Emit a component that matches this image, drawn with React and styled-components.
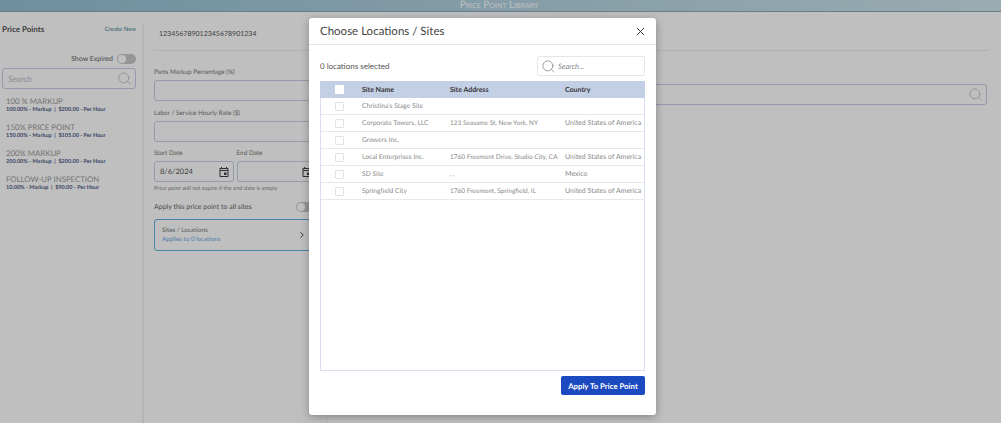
import React from "react";
import styled, { createGlobalStyle } from "styled-components";
import { Search, X, ChevronRight } from "lucide-react";
import { MdOutlineEvent } from "react-icons/md";

const GlobalStyle = createGlobalStyle`
  html, body { margin: 0; padding: 0; height: 100%; overflow: hidden; }
  #root { height: 100%; }
  body {
    font-family: "Lato", "Noto Sans", sans-serif;
    color: #444;
    background: #fff;
    text-rendering: geometricPrecision;
  }
  * { box-sizing: border-box; }
`;

const pricePoints = [
  { name: "100 % MARKUP", detail: "100.00% - Markup  |  $200.00 - Per Hour" },
  { name: "150% PRICE POINT", detail: "150.00% - Markup  |  $105.00 - Per Hour" },
  { name: "200% MARKUP", detail: "200.00% - Markup  |  $200.00 - Per Hour" },
  { name: "FOLLOW-UP INSPECTION", detail: "10.00% - Markup  |  $90.00 - Per Hour" },
];

const sites = [
  { name: "Christina's Stage Site", address: "", country: "" },
  { name: "Corporate Towers, LLC", address: "123 Seasame St, New York, NY", country: "United States of America" },
  { name: "Growers Inc.", address: "", country: "" },
  { name: "Local Enterprises Inc.", address: "1760 Freemont Drive, Studio City, CA", country: "United States of America" },
  { name: "SD Site", address: ", ,", country: "Mexico" },
  { name: "Springfield City", address: "1760 Freemont, Springfield, IL", country: "United States of America" },
];

const App = () => {
  return (
    <>
      <GlobalStyle />
      <Page>
        <TopBar>Price Point Library</TopBar>
        <Body>
          <Sidebar>
            <SideHead>
              <SideTitle>Price Points</SideTitle>
              <CreateLink>Create New</CreateLink>
            </SideHead>
            <ExpiredRow>
              Show Expired
              <Toggle />
            </ExpiredRow>
            <SideSearch>
              <SidePlaceholder>Search</SidePlaceholder>
              <Search size={15} strokeWidth={1.1} color="#a8b0c2" />
            </SideSearch>
            <PointList>
              {pricePoints.map((point) => (
                <Point key={point.name}>
                  <PointName>{point.name}</PointName>
                  <PointDetail>{point.detail}</PointDetail>
                </Point>
              ))}
            </PointList>
          </Sidebar>
          <Main>
            <Code>123456789012345678901234</Code>
            <MainRule />
            <Columns>
              <FormColumn>
                <FieldLabel>Parts Markup Percentage (%)</FieldLabel>
                <Input />
                <FieldLabel>Labor / Service Hourly Rate ($)</FieldLabel>
                <Input />
                <DateRow>
                  <DateField>
                    <FieldLabel>Start Date</FieldLabel>
                    <DateInput>
                      8/6/2024
                      <MdOutlineEvent size={12} color="#3a3f46" />
                    </DateInput>
                  </DateField>
                  <DateField>
                    <FieldLabel>End Date</FieldLabel>
                    <DateInput>
                      <span />
                      <MdOutlineEvent size={12} color="#3a3f46" />
                    </DateInput>
                  </DateField>
                </DateRow>
                <Hint>Price point will not expire if the end date is empty</Hint>
                <ApplyRow>
                  Apply this price point to all sites
                  <Toggle />
                </ApplyRow>
                <SitesCard>
                  <div>
                    <SitesTitle>Sites / Locations</SitesTitle>
                    <SitesLink>Applies to 0 locations</SitesLink>
                  </div>
                  <ChevronRight size={10} strokeWidth={2.2} color="#333" />
                </SitesCard>
              </FormColumn>
              <WideColumn>
                <WideInput>
                  <Search size={15} strokeWidth={1.1} color="#a8b0c2" />
                </WideInput>
              </WideColumn>
            </Columns>
          </Main>
        </Body>
        <Overlay />
        <Modal>
          <ModalHead>
            <ModalTitle>Choose Locations / Sites</ModalTitle>
            <CloseButton>
              <X size={13} strokeWidth={1.8} />
            </CloseButton>
          </ModalHead>
          <ModalBody>
            <ToolRow>
              <Selected>0 locations selected</Selected>
              <ModalSearch>
                <Search size={15} strokeWidth={1} color="#666" />
                <ModalPlaceholder>Search...</ModalPlaceholder>
              </ModalSearch>
            </ToolRow>
            <TableBox>
              <HeadRow>
                <CheckCell $inset={15}>
                  <HeadCheck />
                </CheckCell>
                <span>Site Name</span>
                <span>Site Address</span>
                <span>Country</span>
              </HeadRow>
              {sites.map((site) => (
                <SiteRow key={site.name}>
                  <CheckCell $inset={14}>
                    <RowCheck />
                  </CheckCell>
                  <SiteName>{site.name}</SiteName>
                  <SiteAddress>{site.address}</SiteAddress>
                  <span>{site.country}</span>
                </SiteRow>
              ))}
            </TableBox>
            <Footer>
              <ApplyButton>Apply To Price Point</ApplyButton>
            </Footer>
          </ModalBody>
        </Modal>
      </Page>
    </>
  );
};

const Page = styled.div`
  position: relative;
  width: 1001px;
  height: 423px;
  overflow: hidden;
  display: flex;
  flex-direction: column;
  background: #fff;
  opacity: 0.999;
`;

const TopBar = styled.div`
  height: 12px;
  flex: none;
  background: linear-gradient(90deg, #94bfd4 0%, #cde5eb 100%);
  border-bottom: 1px solid #88a9b8;
  color: #fff;
  font-size: 10px;
  font-variant: small-caps;
  line-height: 10px;
  text-align: center;
  padding-right: 3px;
`;

const Body = styled.div`
  flex: 1;
  display: flex;
`;

const Sidebar = styled.div`
  width: 144px;
  flex: none;
  margin-top: 11px;
  padding-left: 2px;
  padding-right: 6px;
  border-right: 2px solid #f2f2f2;
`;

const SideHead = styled.div`
  display: flex;
  align-items: center;
  justify-content: space-between;
  height: 12px;
`;

const SideTitle = styled.div`
  font-size: 8px;
  font-weight: 700;
  color: #555;
`;

const CreateLink = styled.div`
  font-size: 6px;
  color: #4a7f9a;
`;

const ExpiredRow = styled.div`
  display: flex;
  align-items: center;
  justify-content: flex-end;
  gap: 4px;
  height: 12px;
  margin-top: 18px;
  font-size: 7px;
  color: #666;
`;

const Toggle = styled.div`
  position: relative;
  flex: none;
  width: 19px;
  height: 10px;
  border-radius: 5px;
  background: #c8c8c8;
  &::before {
    content: "";
    position: absolute;
    left: 1px;
    top: 1px;
    width: 8px;
    height: 8px;
    border-radius: 50%;
    background: #fff;
  }
`;

const SideSearch = styled.div`
  display: flex;
  align-items: center;
  justify-content: space-between;
  height: 21px;
  margin-top: 3px;
  padding: 0 3px 0 5px;
  border: 1px solid #c6cfe4;
  border-radius: 3px;
`;

const SidePlaceholder = styled.span`
  font-size: 8.5px;
  font-style: italic;
  color: #b4bccb;
`;

const PointList = styled.div`
  display: flex;
  flex-direction: column;
  gap: 8px;
  margin-top: 7px;
  padding-left: 4px;
`;

const Point = styled.div`
  height: 18px;
`;

const PointName = styled.div`
  font-size: 7.8px;
  line-height: 10px;
  color: #999;
`;

const PointDetail = styled.div`
  font-size: 5.5px;
  line-height: 8px;
  font-weight: 700;
  color: #4c5a86;
  white-space: pre;
`;

const Main = styled.div`
  flex: 1;
  display: flex;
  flex-direction: column;
  padding: 17px 12px 0 10px;
`;

const Code = styled.div`
  font-size: 7px;
  line-height: 11px;
  padding-left: 5px;
  color: #555;
`;

const MainRule = styled.div`
  height: 1px;
  flex: none;
  margin-top: 10px;
  background: #eee;
`;

const Columns = styled.div`
  flex: 1;
  display: flex;
  margin-top: 18px;
`;

const FormColumn = styled.div`
  width: 173px;
  flex: none;
  padding-right: 3px;
  border-right: 1px solid #eee;
`;

const WideColumn = styled.div`
  flex: 1;
  padding: 15px 2px 0 0;
`;

const WideInput = styled.div`
  display: flex;
  align-items: center;
  justify-content: flex-end;
  height: 21px;
  padding-right: 3px;
  border: 1px solid #c6cfe4;
  border-left: 0;
  border-radius: 0 3px 3px 0;
`;

const FieldLabel = styled.div`
  font-size: 6.4px;
  line-height: 8px;
  margin-bottom: 3px;
  color: #777;
`;

const Input = styled.div`
  height: 21px;
  margin-bottom: 8.5px;
  border: 1px solid #c6cfe4;
  border-radius: 3px;
`;

const DateRow = styled.div`
  display: flex;
  gap: 2.5px;
`;

const DateField = styled.div`
  width: 80px;
  flex: none;
`;

const DateInput = styled.div`
  display: flex;
  align-items: center;
  justify-content: space-between;
  height: 21px;
  padding: 0 3px 0 5px;
  font-size: 7.5px;
  color: #555;
  border: 1px solid #c6cfe4;
  border-radius: 3px;
`;

const Hint = styled.div`
  font-size: 5.7px;
  line-height: 7px;
  margin-top: 3px;
  color: #888;
`;

const ApplyRow = styled.div`
  display: flex;
  align-items: center;
  justify-content: space-between;
  height: 12px;
  margin-top: 9px;
  padding-right: 8px;
  font-size: 7px;
  color: #666;
`;

const SitesCard = styled.div`
  display: flex;
  align-items: center;
  justify-content: space-between;
  height: 32px;
  margin-top: 6px;
  padding: 0 15px 0 7px;
  border: 1.5px solid #5fb0dc;
  border-radius: 3px;
`;

const SitesTitle = styled.div`
  font-size: 6.3px;
  line-height: 9px;
  color: #777;
`;

const SitesLink = styled.div`
  font-size: 6.2px;
  line-height: 9px;
  color: #6aa9df;
`;

const Overlay = styled.div`
  position: absolute;
  inset: 0;
  background: rgba(0, 0, 0, 0.25);
`;

const Modal = styled.div`
  position: absolute;
  left: 309px;
  top: 18px;
  width: 347px;
  height: 397px;
  display: flex;
  flex-direction: column;
  background: #fff;
  border-radius: 3px;
  box-shadow: 0 2px 8px rgba(0, 0, 0, 0.3);
`;

const ModalHead = styled.div`
  display: flex;
  align-items: center;
  justify-content: space-between;
  height: 27px;
  flex: none;
  padding: 0 9px 0 11px;
  border-bottom: 1px solid #e7e7e7;
`;

const ModalTitle = styled.div`
  font-size: 11.5px;
  color: #444;
`;

const CloseButton = styled.div`
  display: flex;
  color: #333;
`;

const ModalBody = styled.div`
  flex: 1;
  display: flex;
  flex-direction: column;
  padding: 11px 11px 20px;
`;

const ToolRow = styled.div`
  display: flex;
  align-items: center;
  justify-content: space-between;
  height: 20px;
`;

const Selected = styled.div`
  font-size: 8px;
  color: #555;
`;

const ModalSearch = styled.div`
  display: flex;
  align-items: center;
  gap: 2px;
  width: 108px;
  height: 20px;
  padding-left: 3px;
  border: 1px solid #e6e6e6;
  border-radius: 2px;
`;

const ModalPlaceholder = styled.span`
  font-size: 7.5px;
  font-style: italic;
  color: #888;
`;

const TableBox = styled.div`
  flex: 1;
  margin-top: 5px;
  border: 1px solid #d8e0f0;
  border-top: 0;
`;

const CheckCell = styled.div`
  display: flex;
  padding-left: ${(p) => p.$inset}px;
`;

const HeadRow = styled.div`
  display: grid;
  grid-template-columns: 42px 88px 115px 1fr;
  align-items: center;
  height: 17px;
  margin: 0 -1px;
  background: #c3cfe5;
  font-size: 7px;
  font-weight: 700;
  color: #333;
`;

const HeadCheck = styled.div`
  width: 9px;
  height: 9px;
  background: #fff;
`;

const SiteRow = styled.div`
  display: grid;
  grid-template-columns: 41px 88px 115px 1fr;
  align-items: center;
  height: 17px;
  font-size: 7px;
  color: #8a8a8a;
  white-space: nowrap;
  border-bottom: 1px solid #e8e8e8;
`;

const SiteName = styled.span`
  font-size: 6.7px;
`;

const SiteAddress = styled.span`
  font-size: 6.5px;
`;

const RowCheck = styled.div`
  width: 9px;
  height: 9px;
  border: 1px solid #e2e2e2;
  border-radius: 1px;
`;

const Footer = styled.div`
  display: flex;
  justify-content: flex-end;
  margin-top: 5px;
`;

const ApplyButton = styled.div`
  display: flex;
  align-items: center;
  justify-content: center;
  width: 84px;
  height: 19px;
  border-radius: 2px;
  background: #1a49c0;
  color: #fff;
  font-size: 7.8px;
  font-weight: 700;
`;

export default App;
